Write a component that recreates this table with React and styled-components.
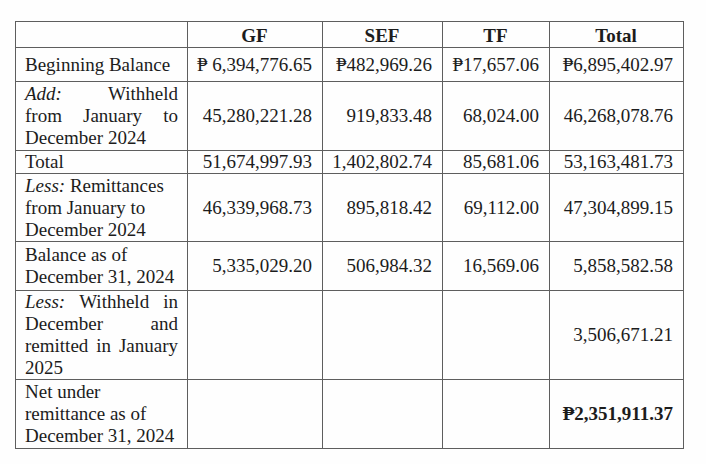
import React from "react";
import styled, { createGlobalStyle } from "styled-components";

const GlobalStyle = createGlobalStyle`
  html, body {
    margin: 0;
    padding: 0;
    background: #fefefe;
  }
  body {
    font-family: "Liberation Serif", "DejaVu Serif", "Times New Roman", serif;
    color: #1c1c1c;
  }
`;

const Page = styled.div`
  padding: 21px 0 0 15px;
`;

const Table = styled.table`
  width: 668px;
  border-collapse: collapse;
  table-layout: fixed;
  font-size: 19px;
  line-height: 22px;
`;

const Col = styled.col`
  width: ${(p) => p.$w}px;
`;

const Row = styled.tr`
  height: ${(p) => p.$h}px;
`;

const Cell = styled.td`
  border: 1px solid #5e5e5e;
  padding: 0 10px 0 9px;
  vertical-align: middle;
`;

const HeadCell = styled(Cell)`
  font-weight: bold;
  text-align: center;
  padding-top: 3px;
`;

const LabelCell = styled(Cell)`
  text-align: left;
  padding-right: 9px;
`;

// one line of a justified label, words spread to both edges
const JustLine = styled.div`
  display: flex;
  justify-content: ${(p) => (p.$last ? "flex-start" : "space-between")};
  gap: ${(p) => (p.$last ? "5px" : "0")};
  white-space: nowrap;
`;

const NumCell = styled(Cell)`
  text-align: right;
  white-space: nowrap;
  font-weight: ${(p) => (p.$bold ? "bold" : "normal")};
`;

const Lead = styled.em`
  font-style: italic;
`;

const funds = ["GF", "SEF", "TF", "Total"];
const widths = [172, 135, 120, 107, 134];

const rows = [
  {
    h: 34,
    label: "Beginning Balance",
    values: ["₱ 6,394,776.65", "₱482,969.26", "₱17,657.06", "₱6,895,402.97"],
  },
  {
    h: 69,
    lines: [["*Add:", "Withheld"], ["from", "January", "to"], ["December", "2024"]],
    values: ["45,280,221.28", "919,833.48", "68,024.00", "46,268,078.76"],
  },
  {
    h: 23,
    label: "Total",
    values: ["51,674,997.93", "1,402,802.74", "85,681.06", "53,163,481.73"],
  },
  {
    h: 68,
    lead: "Less:",
    label: " Remittances from January to December 2024",
    values: ["46,339,968.73", "895,818.42", "69,112.00", "47,304,899.15"],
  },
  {
    h: 49,
    label: "Balance as of December 31, 2024",
    values: ["5,335,029.20", "506,984.32", "16,569.06", "5,858,582.58"],
  },
  {
    h: 88,
    lines: [
      ["*Less:", "Withheld", "in"],
      ["December", "and"],
      ["remitted", "in", "January"],
      ["2025"],
    ],
    values: ["", "", "", "3,506,671.21"],
  },
  {
    h: 69,
    label: "Net under remittance as of December 31, 2024",
    values: ["", "", "", "₱2,351,911.37"],
    boldLast: true,
  },
];

const Word = ({ w }) => (w.startsWith("*") ? <Lead>{w.slice(1)}</Lead> : <span>{w}</span>);

const Label = ({ row }) => {
  if (row.lines) {
    return row.lines.map((words, i) => (
      <JustLine key={i} $last={i === row.lines.length - 1}>
        {words.map((w, k) => (
          <Word key={k} w={w} />
        ))}
      </JustLine>
    ));
  }
  return (
    <>
      {row.lead && <Lead>{row.lead}</Lead>}
      {row.label}
    </>
  );
};

export default function App() {
  return (
    <Page>
      <GlobalStyle />
      <Table>
        <colgroup>
          {widths.map((w, i) => (
            <Col key={i} $w={w} />
          ))}
        </colgroup>
        <thead>
          <Row $h={26}>
            <HeadCell />
            {funds.map((f) => (
              <HeadCell key={f}>{f}</HeadCell>
            ))}
          </Row>
        </thead>
        <tbody>
          {rows.map((r, i) => (
            <Row key={i} $h={r.h}>
              <LabelCell>
                <Label row={r} />
              </LabelCell>
              {r.values.map((v, j) => (
                <NumCell key={j} $bold={r.boldLast && j === 3}>
                  {v}
                </NumCell>
              ))}
            </Row>
          ))}
        </tbody>
      </Table>
    </Page>
  );
}
